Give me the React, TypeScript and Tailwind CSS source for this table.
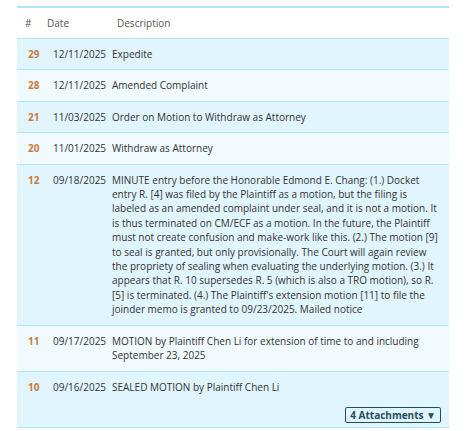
import React from "react";

type Row = { n: string; date: string; desc: string; attach?: boolean };

const rows: Row[] = [
  { n: "29", date: "12/11/2025", desc: "Expedite" },
  { n: "28", date: "12/11/2025", desc: "Amended Complaint" },
  { n: "21", date: "11/03/2025", desc: "Order on Motion to Withdraw as Attorney" },
  { n: "20", date: "11/01/2025", desc: "Withdraw as Attorney" },
  {
    n: "12",
    date: "09/18/2025",
    desc:
      "MINUTE entry before the Honorable Edmond E. Chang: (1.) Docket entry R. [4] was filed by the Plaintiff as a motion, but the filing is labeled as an amended complaint under seal, and it is not a motion. It is thus terminated on CM/ECF as a motion. In the future, the Plaintiff must not create confusion and make-work like this. (2.) The motion [9] to seal is granted, but only provisionally. The Court will again review the propriety of sealing when evaluating the underlying motion. (3.) It appears that R. 10 supersedes R. 5 (which is also a TRO motion), so R. [5] is terminated. (4.) The Plaintiff's extension motion [11] to file the joinder memo is granted to 09/23/2025. Mailed notice",
  },
  {
    n: "11",
    date: "09/17/2025",
    desc: "MOTION by Plaintiff Chen Li for extension of time to and including September 23, 2025",
  },
  { n: "10", date: "09/16/2025", desc: "SEALED MOTION by Plaintiff Chen Li", attach: true },
];

export default function App() {
  return (
    <div className="h-[431px] w-[476px] bg-white pl-[17px] pt-[6px] font-['Open_Sans',sans-serif]">
      <div className="w-[432px] border-t-2 border-[#b3e5fc]">
        <div className="flex h-[30px] items-center bg-white text-[10px] text-[#555]">
          <div className="w-[30px] pl-[8px]">#</div>
          <div className="w-[70px]">Date</div>
          <div>Description</div>
        </div>
        {rows.map((r, i) => (
          <div
            key={r.n}
            className={
              "flex border-t border-[#b3e5fc] py-[8px] text-[10px] leading-[14.4px] text-[#333] " +
              (i % 2 === 0 ? "bg-[#e1f5fe]" : "bg-[#f0faff]")
            }
          >
            <div className="w-[36px] shrink-0 pl-[11px] font-bold text-[#c97a40]">{r.n}</div>
            <div className="w-[59px] shrink-0 whitespace-nowrap">{r.date}</div>
            <div className="flex-1 pr-[8px]">
              <div>{r.desc}</div>
              {r.attach && (
                <div className="-mb-[4px] mt-[13px] flex justify-end">
                  <button className="h-[16px] rounded-[2px] border border-[#1f4e5f] px-[4px] text-[10px] font-bold leading-[14px] text-[#1f4e5f]">
                    4 Attachments ▼
                  </button>
                </div>
              )}
            </div>
          </div>
        ))}
        <div className="border-t border-[#b3e5fc]" />
      </div>
    </div>
  );
}
